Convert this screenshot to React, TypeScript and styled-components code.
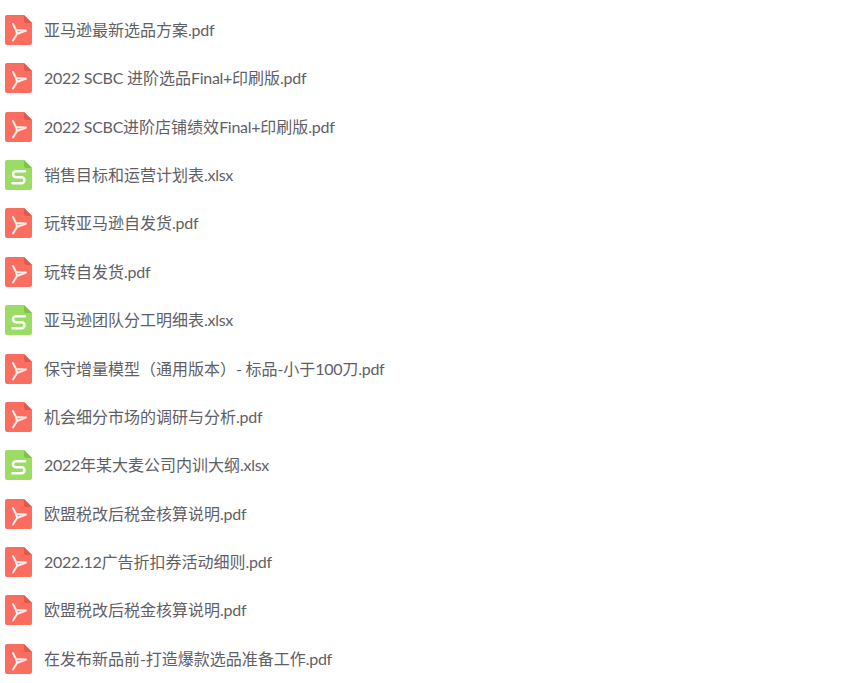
import React from "react";
import styled, { createGlobalStyle } from "styled-components";

const Global = createGlobalStyle`
  html, body { margin: 0; padding: 0; background: #fff; }
  body { overflow: hidden; }
`;
const List = styled.ul`
  list-style: none; margin: 0; padding: 5.7px 0 0 5px;
  display: flex; flex-direction: column; width: 867px; height: 683px; box-sizing: border-box; overflow: hidden;
`;
const Row = styled.li`
  flex: 0 0 48.385px; display: flex; align-items: center; gap: 12px;
`;
const Name = styled.span`
  font: 16px/24px "Lato", "Noto Sans CJK SC", sans-serif;
  color: #5f6066; white-space: nowrap;
`;
const Latin = styled.span`
  letter-spacing: -0.28px;
`;
const Glyph = styled.svg`
  width: 27px; height: 30px; flex: none; display: block;
`;

const Pdf = () => (
  <Glyph viewBox="0 0 27 30">
    <path d="M2 0H19L27 8V28a2 2 0 0 1-2 2H2a2 2 0 0 1-2-2V2a2 2 0 0 1 2-2Z" fill="#fb6d5f" />
    <path d="M19 0L27 8H21a2 2 0 0 1-2-2Z" fill="#e2594a" />
    <path d="M8 9L11 15L21 15.5L12 19L8 25.5M11 15L12 19" fill="none" stroke="#fff" strokeWidth="2" strokeLinejoin="round" strokeLinecap="round" opacity="0.9" />
  </Glyph>
);
const Sheet = () => (
  <Glyph viewBox="0 0 27 30">
    <path d="M2 0H19L27 8V28a2 2 0 0 1-2 2H2a2 2 0 0 1-2-2V2a2 2 0 0 1 2-2Z" fill="#9bdc64" />
    <path d="M19 0L27 8H21a2 2 0 0 1-2-2Z" fill="#7fc24a" />
    <path d="M20 11.3H11a3 3 0 0 0 0 6H16.5a3 3 0 0 1 0 6H7.5" fill="none" stroke="#fff" strokeWidth="2.5" strokeLinecap="round" />
  </Glyph>
);
const files = [
  "亚马逊最新选品方案.pdf",
  "2022 SCBC 进阶选品Final+印刷版.pdf",
  "2022 SCBC进阶店铺绩效Final+印刷版.pdf",
  "销售目标和运营计划表.xlsx",
  "玩转亚马逊自发货.pdf",
  "玩转自发货.pdf",
  "亚马逊团队分工明细表.xlsx",
  "保守增量模型（通用版本）- 标品-小于100刀.pdf",
  "机会细分市场的调研与分析.pdf",
  "2022年某大麦公司内训大纲.xlsx",
  "欧盟税改后税金核算说明.pdf",
  "2022.12广告折扣券活动细则.pdf",
  "欧盟税改后税金核算说明.pdf",
  "在发布新品前-打造爆款选品准备工作.pdf",
];
const runs = (name: string) =>
  name.split(/([\x20-\x7e]+)/).map((part, i) => (i % 2 ? <Latin key={i}>{part}</Latin> : part));

export default function App() {
  return (
    <>
      <Global />
      <List>
        {files.map((f, i) => (
          <Row key={i}>
            {f.endsWith("xlsx") ? <Sheet /> : <Pdf />}
            <Name>{runs(f)}</Name>
          </Row>
        ))}
      </List>
    </>
  );
}
